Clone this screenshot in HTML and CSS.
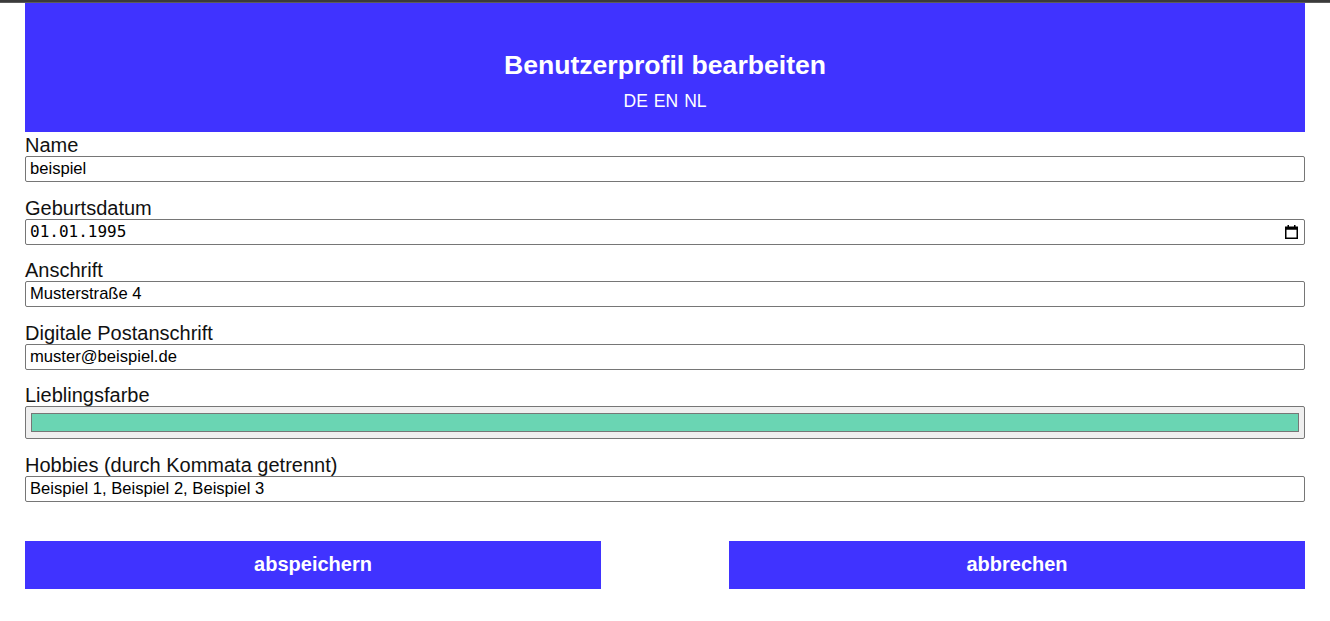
FILE: index.html
```html
<!DOCTYPE html>
<html lang="de">
<head>
<meta charset="utf-8">
<title>Benutzerprofil bearbeiten</title>
<link rel="stylesheet" href="styles.css">
</head>
<body>
<div class="topbar"></div>
<main class="page">
  <header class="header">
    <h1 class="title">Benutzerprofil bearbeiten</h1>
    <nav class="langs">
      <a class="lang" href="#">DE</a>
      <a class="lang" href="#">EN</a>
      <a class="lang" href="#">NL</a>
    </nav>
  </header>
  <form class="form">
    <div class="field">
      <label class="label" for="name">Name</label>
      <input class="input" id="name" type="text" value="beispiel">
    </div>
    <div class="field">
      <label class="label" for="geb">Geburtsdatum</label>
      <div class="input date">
        <input class="date-text" id="geb" type="text" value="01.01.1995">
        <svg class="cal" width="13" height="14" viewBox="0 0 13 14" aria-hidden="true">
          <rect x="2.5" y="0" width="1.5" height="3" fill="#000"/>
          <rect x="9" y="0" width="1.5" height="3" fill="#000"/>
          <rect x="0.75" y="2.25" width="11.5" height="11" fill="none" stroke="#000" stroke-width="1.5"/>
          <rect x="0.75" y="2.25" width="11.5" height="2.5" fill="#000"/>
        </svg>
      </div>
    </div>
    <div class="field">
      <label class="label" for="adr">Anschrift</label>
      <input class="input" id="adr" type="text" value="Musterstraße 4">
    </div>
    <div class="field">
      <label class="label" for="mail">Digitale Postanschrift</label>
      <input class="input" id="mail" type="text" value="muster@beispiel.de">
    </div>
    <div class="field">
      <label class="label" for="farbe">Lieblingsfarbe</label>
      <div class="color" id="farbe"><div class="swatch"></div></div>
    </div>
    <div class="field">
      <label class="label" for="hob">Hobbies (durch Kommata getrennt)</label>
      <input class="input" id="hob" type="text" value="Beispiel 1, Beispiel 2, Beispiel 3">
    </div>
    <div class="actions">
      <button class="btn" type="button">abspeichern</button>
      <button class="btn" type="button">abbrechen</button>
    </div>
  </form>
</main>
</body>
</html>
```
FILE: styles.css
```css
html, body {
  margin: 0;
  padding: 0;
  background: #fff;
}
body {
  font-family: "Liberation Sans", Arial, sans-serif;
  color: #000;
}
.topbar {
  height: 2px;
  background: #3b3b3b;
  border-bottom: 1px solid #5c5c5c;
}
.page {
  width: 1280px;
  margin: 0 auto;
}
.header {
  background: #4033ff;
  color: #fff;
  text-align: center;
  padding: 47px 0 21px;
}
.title {
  margin: 0;
  font-size: 26.6px;
  line-height: 31px;
  font-weight: bold;
}
.langs {
  margin-top: 10px;
  font-size: 17.5px;
  line-height: 20px;
  display: flex;
  justify-content: center;
  gap: 6px;
}
.lang {
  color: #fff;
  text-decoration: none;
}
.form {
  padding-top: 3px;
}
.field {
  display: flex;
  flex-direction: column;
  margin-bottom: 15.5px;
}
.label {
  font-size: 20px;
  line-height: 21px;
  color: #111;
}
.input {
  box-sizing: border-box;
  width: 100%;
  height: 26px;
  margin: 0;
  padding: 2px 4px;
  border: 1px solid #767676;
  border-radius: 2px;
  font-family: "Liberation Sans", Arial, sans-serif;
  font-size: 16.6px;
  color: #000;
  background: #fff;
  outline: none;
}
.date {
  display: flex;
  align-items: center;
  padding: 0 6px 0 4px;
}
.date-text {
  flex: 1;
  border: 0;
  padding: 0;
  margin: 0;
  outline: none;
  background: transparent;
  font-family: "DejaVu Sans Mono", "Liberation Mono", monospace;
  font-size: 16px;
  color: #000;
}
.cal {
  display: block;
}
.color {
  box-sizing: border-box;
  height: 33px;
  padding: 6px 5px;
  background: #efefef;
  border: 1px solid #767676;
  border-radius: 2px;
}
.swatch {
  box-sizing: border-box;
  height: 19px;
  background: #6ad5b3;
  border: 1px solid #767676;
}
.actions {
  display: flex;
  justify-content: space-between;
  margin-top: 39px;
}
.btn {
  width: 45%;
  height: 48px;
  border: 0;
  padding: 0;
  background: #4033ff;
  color: #fff;
  font-family: "Liberation Sans", Arial, sans-serif;
  font-size: 20px;
  font-weight: bold;
}
```
